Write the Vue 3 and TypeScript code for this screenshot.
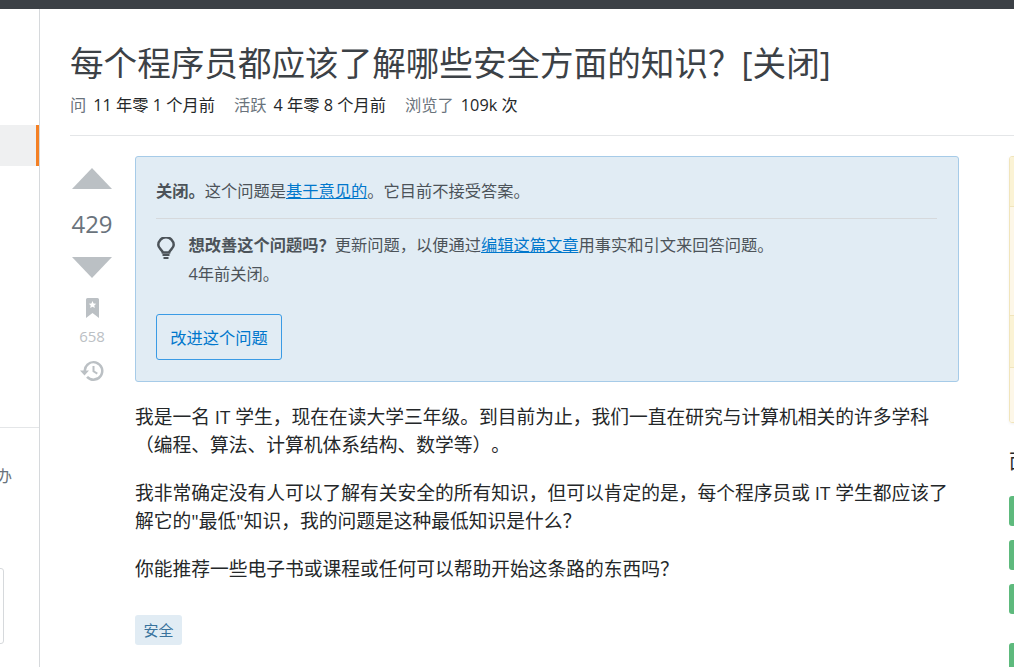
<script setup lang="ts">
const meta = [
  { label: "问", value: "11 年零 1 个月前" },
  { label: "活跃", value: "4 年零 8 个月前" },
  { label: "浏览了", value: "109k 次" },
];
const badgeGaps = [0, 1, 2, 3];
</script>

<template>
  <div class="topbar"></div>
  <div class="page">
    <aside class="leftnav">
      <div class="nav-active"></div>
      <div class="nav-teams">
        <span class="teams-text">办</span>
        <div class="teams-card"></div>
      </div>
    </aside>

    <main class="content">
      <header class="q-head">
        <h1>每个程序员都应该了解哪些安全方面的知识&#xFF1F;[关闭]</h1>
        <div class="meta">
          <span v-for="m in meta" :key="m.label">
            <em>{{ m.label }}</em>{{ m.value }}
          </span>
        </div>
      </header>

      <div class="q-row">
        <div class="post">
          <div class="votes">
            <div class="arrow up"></div>
            <div class="score">429</div>
            <div class="arrow down"></div>
            <svg class="bookmark" width="13" height="20" viewBox="0 0 13 20">
              <path
                fill="#bbc0c4"
                d="M0 1.5A1.5 1.5 0 0 1 1.5 0h10A1.5 1.5 0 0 1 13 1.5V20l-6.5-5L0 20z"
              />
              <path
                fill="#fff"
                d="M6.5 3l1.1 2.4 2.6.3-1.9 1.8.5 2.6-2.3-1.3-2.3 1.3.5-2.6-1.9-1.8 2.6-.3z"
              />
            </svg>
            <div class="fav">658</div>
            <svg class="history" width="24" height="20" viewBox="0 0 24 20">
              <path
                fill="#bbc0c4"
                d="M13.5 0a10 10 0 1 1-7.4 16.7l1.900-1.700a7.500 7.500 0 1 0-2-5.500H9l-4.500 5L0 9.500h3.500A10 10 0 0 1 13.500 0zM12.500 5h2v4.700l3.300 2-1 1.700-4.300-2.600z"
              />
            </svg>
          </div>

          <div class="post-body">
            <section class="notice">
              <p class="notice-top"><b>关闭。</b>这个问题是<a>基于意见的</a>。它目前不接受答案。</p>
              <div class="notice-tip">
                <svg class="bulb" width="18" height="22" viewBox="0 0 18 22">
                  <path
                    fill="none"
                    stroke="#4c5359"
                    stroke-width="2.500"
                    d="M5.800 15.500C5.400 12.800 1.300 11.300 1.300 8a7.700 7.700 0 0 1 15.400 0c0 3.300-4.100 4.800-4.500 7.500z"
                  />
                  <path fill="#4c5359" d="M5.500 17h7v2h-7zM6.500 20h5v2h-5z" />
                </svg>
                <div>
                  <p><b>想改善这个问题吗&#xFF1F;</b>更新问题&#xFF0C;以便通过<a>编辑这篇文章</a>用事实和引文来回答问题。</p>
                  <p class="closed-at">4年前关闭。</p>
                </div>
              </div>
              <button class="improve">改进这个问题</button>
            </section>

            <div class="text">
              <p>我是一名 IT 学生&#xFF0C;现在在读大学三年级。到目前为止&#xFF0C;我们一直在研究与计算机相关的许多学科&#xFF08;编程、算法、计算机体系结构、数学等&#xFF09;。</p>
              <p>我非常确定没有人可以了解有关安全的所有知识&#xFF0C;但可以肯定的是&#xFF0C;每个程序员或 IT 学生都应该了解它的"最低"知识&#xFF0C;我的问题是这种最低知识是什么&#xFF1F;</p>
              <p>你能推荐一些电子书或课程或任何可以帮助开始这条路的东西吗&#xFF1F;</p>
            </div>
            <span class="tag">安全</span>
          </div>
        </div>

        <aside class="rightcol">
          <div class="yellow">
            <div class="y-head h1"></div>
            <div class="y-item h2"></div>
            <div class="y-head h3"></div>
            <div class="y-item h4"></div>
          </div>
          <div class="related-title">面</div>
          <div class="badges">
            <div v-for="b in badgeGaps" :key="b" class="badge"></div>
          </div>
        </aside>
      </div>
    </main>
  </div>
</template>

<style>
html,
body {
  margin: 0;
  background: #fff;
  overflow: hidden;
}
</style>

<style scoped>
* {
  box-sizing: border-box;
}
.topbar {
  height: 9px;
  background: #3c4146;
}
.page {
  display: flex;
  height: 658px;
  overflow: hidden;
  font-family: "Open Sans", "Noto Sans CJK SC", sans-serif;
  color: #242729;
  text-spacing-trim: space-all;
}
.leftnav {
  flex: 0 0 40px;
  width: 40px;
  border-right: 1px solid #d6d9dc;
  padding-top: 116px;
  overflow: hidden;
}
.nav-active {
  height: 41px;
  background: #eff0f1;
  border-right: 3px solid #f48024;
}
.nav-teams {
  margin-top: 261px;
  border-top: 1px solid #e4e6e8;
  padding-top: 38px;
}
.teams-text {
  display: block;
  margin-left: -4px;
  font-size: 16px;
  line-height: 20px;
  color: #6a737c;
}
.teams-card {
  margin-top: 82px;
  margin-left: -6px;
  width: 10px;
  height: 76px;
  border: 1px solid #d6d9dc;
  border-radius: 3px;
}
.content {
  flex: 1;
  min-width: 0;
  padding-left: 30px;
  overflow: hidden;
}
.q-head {
  height: 127px;
  border-bottom: 1px solid #e4e6e8;
  padding-top: 29px;
  width: 1200px;
}
h1 {
  margin: 0;
  font-size: 33.600px;
  font-weight: 400;
  line-height: 50px;
  color: #3c4146;
  white-space: nowrap;
}
.meta {
  display: flex;
  gap: 19px;
  margin-top: 7px;
  font-size: 16.250px;
  line-height: 20px;
}
.meta em {
  font-style: normal;
  color: #6a737c;
  margin-right: 7px;
}
.q-row {
  display: flex;
  gap: 50px;
  padding-top: 20px;
  width: 1200px;
}
.post {
  display: flex;
  flex: 0 0 889px;
}
.votes {
  flex: 0 0 65px;
  width: 65px;
  display: flex;
  flex-direction: column;
  align-items: center;
  padding: 12px 21px 0 0;
}
.arrow {
  width: 0;
  height: 0;
  border-left: 20.500px solid transparent;
  border-right: 20.500px solid transparent;
}
.arrow.up {
  border-bottom: 21px solid #bbc0c4;
}
.arrow.down {
  border-top: 21px solid #bbc0c4;
}
.score {
  margin: 19px 0 17px;
  font-size: 24px;
  line-height: 32px;
  color: #6a737c;
}
.bookmark {
  display: block;
  margin-top: 20px;
}
.fav {
  margin-top: 8px;
  font-size: 15px;
  line-height: 20px;
  color: #bbc0c4;
}
.history {
  display: block;
  margin-top: 15px;
}
.post-body {
  flex: 1;
  min-width: 0;
}
.notice {
  height: 226px;
  background: #e1ecf4;
  border: 1px solid #a6cbe8;
  border-radius: 3px;
  padding: 22px 21px 0 20px;
  font-size: 16.250px;
  line-height: 24px;
  color: #4c5359;
}
.notice p {
  margin: 0;
}
.notice b {
  font-weight: 700;
}
.notice a {
  color: #0077cc;
  text-decoration: underline;
}
.notice-top {
  padding-bottom: 15px;
  border-bottom: 1px solid #d6d9dc;
}
.notice-tip {
  display: flex;
  gap: 13.500px;
  padding-top: 14px;
}
.bulb {
  flex: none;
  margin-top: 4px;
  margin-left: 1px;
}
.closed-at {
  margin-top: 5px !important;
}
.improve {
  display: block;
  margin-top: 28px;
  width: 126px;
  height: 46px;
  padding: 1px 0 0;
  background: transparent;
  border: 1px solid #3a9be5;
  border-radius: 3px;
  color: #0077cc;
  font: inherit;
  font-size: 16.250px;
}
.text {
  margin-top: 20.500px;
  font-size: 18.750px;
  line-height: 28.500px;
  color: #242729;
}
.text p {
  margin: 0 0 19px;
}
.tag {
  display: inline-block;
  margin-top: 12.500px;
  padding: 0 8.500px;
  height: 30px;
  line-height: 30px;
  font-size: 15px;
  background: #e1ecf4;
  color: #39739d;
  border-radius: 3px;
}
.rightcol {
  flex: 0 0 300px;
}
.yellow {
  border: 1px solid #f1e5bc;
  border-radius: 3px;
  overflow: hidden;
  box-shadow: 0 1px 3px rgba(0, 0, 0, 0.06);
}
.y-head {
  background: #fbf3d5;
  border-bottom: 1px solid #f1e5bc;
}
.y-item {
  background: #fdf7e8;
  border-bottom: 1px solid #f1e5bc;
}
.h1 {
  height: 50px;
}
.h2 {
  height: 109px;
}
.h3 {
  height: 52px;
}
.h4 {
  height: 54px;
  border-bottom: 0;
}
.related-title {
  margin-top: 25px;
  font-size: 20px;
  line-height: 28px;
  color: #242729;
}
.badges {
  display: flex;
  flex-direction: column;
  gap: 14px;
  margin-top: 20px;
}
.badge {
  width: 38px;
  height: 30px;
  border-radius: 3px;
  background: #5eba7d;
}
.badge:last-child {
  margin-top: 15px;
}
</style>
